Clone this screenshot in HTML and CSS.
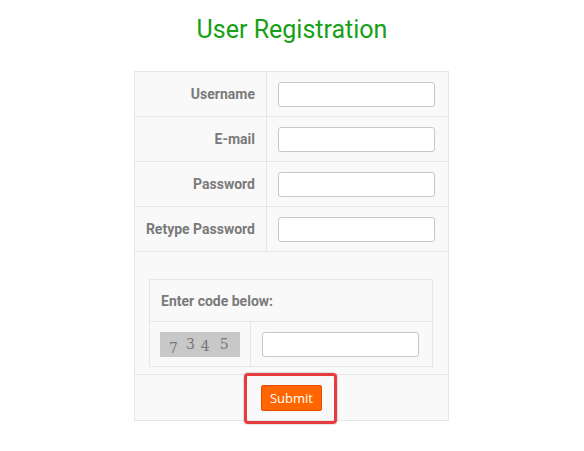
FILE: index.html
```html
<html lang="en">
<head>
    <meta charset="UTF-8">
    <meta name="viewport" content="width=device-width, initial-scale=1.0">
    <title>User Registration</title>
    <link rel="stylesheet" href="styles.css">
</head>
<body>

    <h1 class="title">User Registration</h1>

    <!-- Registration form -->
    <form class="reg-form">
        <table class="reg-table">
            <tr>
                <th>Username</th>
                <td><input type="text" class="field"></td>
            </tr>
            <tr>
                <th>E-mail</th>
                <td><input type="text" class="field"></td>
            </tr>
            <tr>
                <th>Password</th>
                <td><input type="password" class="field"></td>
            </tr>
            <tr>
                <th>Retype Password</th>
                <td><input type="password" class="field"></td>
            </tr>
            <tr>
                <td colspan="2" class="captcha-cell">
                    <!-- Captcha block -->
                    <table class="captcha-table">
                        <tr>
                            <th colspan="2" class="captcha-head">Enter code below:</th>
                        </tr>
                        <tr>
                            <td class="captcha-img-cell">
                                <div class="captcha-img">
                                    <span class="d1">7</span><span class="d2">3</span><span class="d3">4</span><span class="d4">5</span>
                                </div>
                            </td>
                            <td class="captcha-input-cell"><input type="text" class="field"></td>
                        </tr>
                    </table>
                </td>
            </tr>
            <tr>
                <td colspan="2" class="submit-cell">
                    <span class="highlight">
                        <button type="button" class="submit-btn">Submit</button>
                    </span>
                </td>
            </tr>
        </table>
    </form>

</body>
</html>
```

FILE: styles.css
```css
/* Basic styling */
body {
    font-family: Roboto, "Liberation Sans", sans-serif;
    background-color: #fff;
    color: #777;
    margin: 0;
    padding: 0;
}

.title {
    margin: 14px 0 0;
    text-align: center;
    font-size: 25px;
    font-weight: normal;
    color: #16a016;
    line-height: 32px;
}

/* Form table */
.reg-table {
    border-collapse: collapse;
    margin: 25px 0 0 calc(50% - 158px);
    width: 315px;
    background-color: #f9f9f9;
}

.reg-table th,
.reg-table td {
    border: 1px solid #e6e6e6;
    padding: 0;
    height: 45px;
}

.reg-table th {
    width: 120px;
    padding-right: 11px;
    text-align: right;
    font-size: 14px;
    font-weight: bold;
    color: #7a7a7a;
}

.reg-table td {
    padding-left: 11px;
}

.field {
    display: block;
    width: 157px;
    height: 25px;
    box-sizing: border-box;
    border: 1px solid #c8c8c8;
    border-radius: 3px;
    background: #fff;
}

/* Captcha */
.reg-table td.captcha-cell {
    padding: 27px 15px 7px 14px;
    height: auto;
}

.captcha-table {
    border-collapse: collapse;
    width: 100%;
}

.captcha-table th.captcha-head {
    text-align: left;
    padding: 0 0 0 11px;
    height: 42px;
    width: auto;
}

.captcha-table td {
    height: 45px;
}

.captcha-table td.captcha-img-cell {
    width: 90px;
    padding-left: 10px;
}

.captcha-table td.captcha-input-cell {
    padding-left: 11px;
}

.captcha-img {
    width: 80px;
    height: 25px;
    background-color: #c8c8c8;
    font-family: "DejaVu Serif", serif;
    font-size: 14px;
    color: #777;
    line-height: 25px;
    box-sizing: border-box;
    padding-left: 9px;
}

.captcha-img span {
    display: inline-block;
}

.d1 { vertical-align: -2px; margin-right: 8px; }
.d2 { vertical-align: 2px; margin-right: 6px; }
.d3 { vertical-align: 0; margin-right: 10px; }
.d4 { vertical-align: 2px; }

/* Submit */
.reg-table td.submit-cell {
    text-align: center;
    padding: 0;
    height: 46px;
}

.highlight {
    position: relative;
    display: inline-block;
    vertical-align: middle;
}

/* Red annotation frame around the button */
.highlight::after {
    content: '';
    position: absolute;
    left: -17px;
    right: -15px;
    top: -12px;
    bottom: -13px;
    border: 3px solid #e63b3f;
    border-radius: 4px;
    box-shadow: 0 0 2px rgba(0, 0, 0, 0.35);
    pointer-events: none;
}

.submit-btn {
    display: block;
    width: 61px;
    height: 26px;
    padding: 0;
    font-family: "Open Sans", sans-serif;
    font-size: 13px;
    color: #fff;
    background-color: #ff6600;
    border: 1px solid #e84a00;
    border-radius: 2px;
    cursor: pointer;
}
```
